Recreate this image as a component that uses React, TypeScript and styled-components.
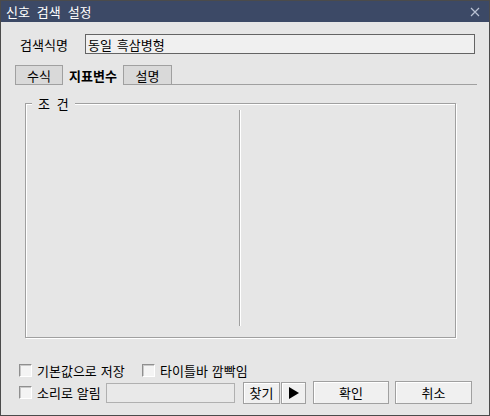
import styled, { createGlobalStyle } from 'styled-components';

const GlobalStyle = createGlobalStyle`
    html, body {
        margin: 0;
        padding: 0;
        background: #e6e6e6;
    }
    * {
        box-sizing: border-box;
    }
    body {
        font-family: 'Noto Sans CJK KR', 'Noto Sans', sans-serif;
        font-size: 13px;
        color: #000;
    }
`;

const Window = styled.div`
    width: 490px;
    height: 416px;
    border: 1px solid #4b4b4b;
    background-color: #e6e6e6;
    display: flex;
    flex-direction: column;
`;

const TitleBar = styled.div`
    height: 21px;
    background-color: #3c4966;
    color: #fff;
    display: flex;
    align-items: center;
    justify-content: space-between;
    padding: 0 9px 0 5px;
    font-size: 13px;
    word-spacing: 4px;
`;

const Content = styled.div`
    flex: 1;
    display: flex;
    flex-direction: column;
    padding: 0 11px 0 14px;
`;

const FieldRow = styled.div`
    margin-top: 12px;
    display: flex;
    align-items: center;
`;

const Label = styled.div`
    width: 70px;
    padding-left: 5px;
`;

const NameInput = styled.div`
    width: 390px;
    height: 20px;
    border: 1px solid #646464;
    background-color: #f0f0f0;
    padding-left: 2px;
    display: flex;
    align-items: center;
    font-size: 13px;
    word-spacing: 2px;
`;

const TabBar = styled.div`
    margin-top: 11px;
    width: 462px;
    height: 20px;
    display: flex;
`;

const Tab = styled.div<{ $active?: boolean; $w: number }>`
    width: ${(p) => p.$w}px;
    height: 20px;
    display: flex;
    align-items: center;
    justify-content: center;
    background-color: ${(p) => (p.$active ? '#e6e6e6' : '#d9d9d9')};
    border: ${(p) => (p.$active ? 'none' : '1px solid #a0a0a0')};
    font-weight: ${(p) => (p.$active ? 700 : 400)};
`;

const TabFill = styled.div`
    flex: 1;
    border-bottom: 1px solid #a0a0a0;
`;

const GroupBox = styled.div`
    position: relative;
    margin: 18px 0 0 10px;
    width: 431px;
    height: 235px;
    border: 1px solid #a0a0a0;
    box-shadow: inset 1px 1px 0 #fff, 1px 1px 0 #fff;
    display: flex;
    padding: 6px 0 11px 0;
`;

const Legend = styled.span`
    position: absolute;
    top: -9px;
    left: 6px;
    padding: 0 6px;
    background-color: #e6e6e6;
    word-spacing: 4px;
    line-height: 17px;
`;

const LeftPane = styled.div`
    width: 213px;
`;

const Divider = styled.div`
    width: 1px;
    background-color: #a0a0a0;
    box-shadow: 1px 0 0 #fff;
`;

const OptionRow = styled.div<{ $h: number; $mt: number }>`
    margin-top: ${(p) => p.$mt}px;
    height: ${(p) => p.$h}px;
    padding-left: 4px;
    display: flex;
    align-items: center;
`;

const Option = styled.label<{ $w?: number }>`
    width: ${(p) => (p.$w ? `${p.$w}px` : 'auto')};
    display: flex;
    align-items: center;
    gap: 5px;
    white-space: nowrap;
    word-spacing: 1px;
`;

const CheckBox = styled.span`
    width: 13px;
    height: 13px;
    flex: none;
    border: 1px solid;
    border-color: #8f8f8f #ffffff #ffffff #8f8f8f;
    background-color: #f4f4f4;
    box-shadow: inset 1px 1px 0 #c9c9c9;
`;

const SoundInput = styled.div`
    width: 129px;
    height: 20px;
    border: 1px solid #b0b0b0;
    background-color: #e9e9e9;
`;

const Button = styled.button<{ $w: number; $h: number; $ml: number }>`
    width: ${(p) => p.$w}px;
    height: ${(p) => p.$h}px;
    margin-left: ${(p) => p.$ml}px;
    padding: 0;
    border: 1px solid #a0a0a0;
    background-color: #f0f0f0;
    box-shadow: inset 1px 1px 0 #fff;
    font-family: inherit;
    font-size: 13px;
    color: #000;
    display: flex;
    align-items: center;
    justify-content: center;
`;

function App() {
    return (
        <>
            <GlobalStyle />
            <Window>
                <TitleBar>
                    <span>신호 검색 설정</span>
                    <svg width="10" height="10" viewBox="0 0 10 10">
                        <path d="M1 1 L9 9 M9 1 L1 9" stroke="#b9c1d2" strokeWidth="1.2" />
                    </svg>
                </TitleBar>
                <Content>
                    <FieldRow>
                        <Label>검색식명</Label>
                        <NameInput>동일 흑삼병형</NameInput>
                    </FieldRow>
                    <TabBar>
                        <Tab $w={48}>수식</Tab>
                        <Tab $w={60} $active>
                            지표변수
                        </Tab>
                        <Tab $w={49}>설명</Tab>
                        <TabFill />
                    </TabBar>
                    <GroupBox>
                        <Legend>조 건</Legend>
                        <LeftPane />
                        <Divider />
                    </GroupBox>
                    <OptionRow $mt={23} $h={18}>
                        <Option $w={123}>
                            <CheckBox />
                            기본값으로 저장
                        </Option>
                        <Option>
                            <CheckBox />
                            타이틀바 깜빡임
                        </Option>
                    </OptionRow>
                    <OptionRow $mt={2} $h={23}>
                        <Option $w={87}>
                            <CheckBox />
                            소리로 알림
                        </Option>
                        <SoundInput />
                        <Button $w={37} $h={22} $ml={8}>
                            찾기
                        </Button>
                        <Button $w={25} $h={22} $ml={1}>
                            <svg width="12" height="12" viewBox="0 0 12 12">
                                <polygon points="1,0 11,6 1,12" fill="#000" />
                            </svg>
                        </Button>
                        <Button $w={76} $h={23} $ml={7}>
                            확인
                        </Button>
                        <Button $w={77} $h={23} $ml={6}>
                            취소
                        </Button>
                    </OptionRow>
                </Content>
            </Window>
        </>
    );
}

export default App;
